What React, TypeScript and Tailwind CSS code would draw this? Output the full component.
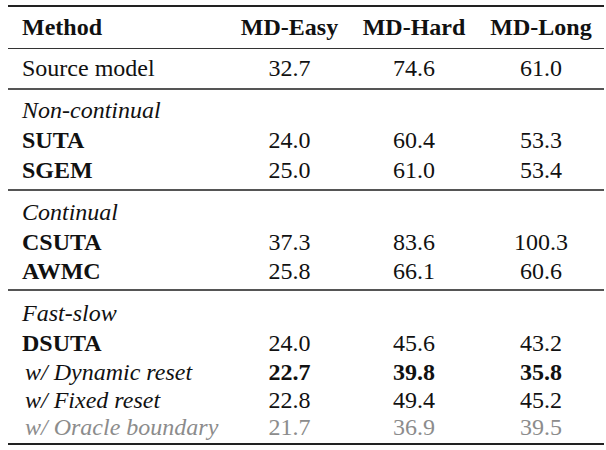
type Row = {
  name: string;
  vals: string[];
  kind?: 'bold' | 'sub' | 'oracle' | 'plain' | 'group';
  boldVals?: boolean;
  h: string;
};

const groups: { pt: string; pb: string; rows: Row[] }[] = [
  {
    pt: 'pt-[5px]',
    pb: 'pb-[5px]',
    rows: [
      { name: 'Non-continual', vals: [], kind: 'group', h: 'h-[30px]' },
      { name: 'SUTA', vals: ['24.0', '60.4', '53.3'], kind: 'bold', h: 'h-[30px]' },
      { name: 'SGEM', vals: ['25.0', '61.0', '53.4'], kind: 'bold', h: 'h-[29px]' },
    ],
  },
  {
    pt: 'pt-[6px]',
    pb: 'pb-[4px]',
    rows: [
      { name: 'Continual', vals: [], kind: 'group', h: 'h-[30px]' },
      { name: 'CSUTA', vals: ['37.3', '83.6', '100.3'], kind: 'bold', h: 'h-[29px]' },
      { name: 'AWMC', vals: ['25.8', '66.1', '60.6'], kind: 'bold', h: 'h-[29px]' },
    ],
  },
  {
    pt: 'pt-[7px]',
    pb: 'pb-[3px]',
    rows: [
      { name: 'Fast-slow', vals: [], kind: 'group', h: 'h-[30px]' },
      { name: 'DSUTA', vals: ['24.0', '45.6', '43.2'], kind: 'bold', h: 'h-[29px]' },
      { name: 'w/ Dynamic reset', vals: ['22.7', '39.8', '35.8'], kind: 'sub', boldVals: true, h: 'h-[29px]' },
      { name: 'w/ Fixed reset', vals: ['22.8', '49.4', '45.2'], kind: 'sub', h: 'h-[28px]' },
      { name: 'w/ Oracle boundary', vals: ['21.7', '36.9', '39.5'], kind: 'oracle', h: 'h-[26px]' },
    ],
  },
];

function nameClass(kind: Row['kind']) {
  if (kind === 'bold') return 'pl-[14px] font-bold';
  if (kind === 'sub') return 'pl-[17px] italic';
  if (kind === 'oracle') return 'pl-[17px] italic text-[#8c8c8c]';
  if (kind === 'group') return 'pl-[14px] italic';
  return 'pl-[14px]';
}

function DataRow({ row }: { row: Row }) {
  const valCls = `text-center ${row.boldVals ? 'font-bold' : ''} ${row.kind === 'oracle' ? 'text-[#8c8c8c]' : ''}`;
  return (
    <tr className={row.h}>
      <td className={`p-0 ${nameClass(row.kind)}`}>{row.name}</td>
      {[0, 1, 2].map((i) => (
        <td key={i} className={`p-0 ${valCls}`}>
          {row.vals[i] ?? ''}
        </td>
      ))}
    </tr>
  );
}

export default function App() {
  return (
    <div className="w-[606px] h-[450px] bg-white pt-[5px] px-[8px] text-[#111] font-serif">
      <table className="w-[596px] table-fixed border-collapse font-['Liberation_Serif',serif] text-[24px] leading-none">
        <colgroup>
          <col className="w-[221px]" />
          <col className="w-[121px]" />
          <col className="w-[128px]" />
          <col className="w-[126px]" />
        </colgroup>
        <thead>
          <tr className="h-[42px] border-t-2 border-b border-t-[#222] border-b-[#333] font-bold">
            <th className="p-0 pl-[14px] text-left">Method</th>
            <th className="p-0 text-center">MD-Easy</th>
            <th className="p-0 text-center">MD-Hard</th>
            <th className="p-0 text-center">MD-Long</th>
          </tr>
        </thead>
        <tbody className="border-b-2 border-[#555]">
          <DataRow row={{ name: 'Source model', vals: ['32.7', '74.6', '61.0'], h: 'h-[41px]' }} />
        </tbody>
        {groups.map((g, gi) => (
          <tbody key={gi} className={gi === groups.length - 1 ? 'border-b-2 border-[#222]' : 'border-b-2 border-[#555]'}>
            <tr>
              <td colSpan={4} className={`p-0 ${g.pt}`} />
            </tr>
            {g.rows.map((r) => (
              <DataRow key={r.name} row={r} />
            ))}
            <tr>
              <td colSpan={4} className={`p-0 ${g.pb}`} />
            </tr>
          </tbody>
        ))}
      </table>
    </div>
  );
}
